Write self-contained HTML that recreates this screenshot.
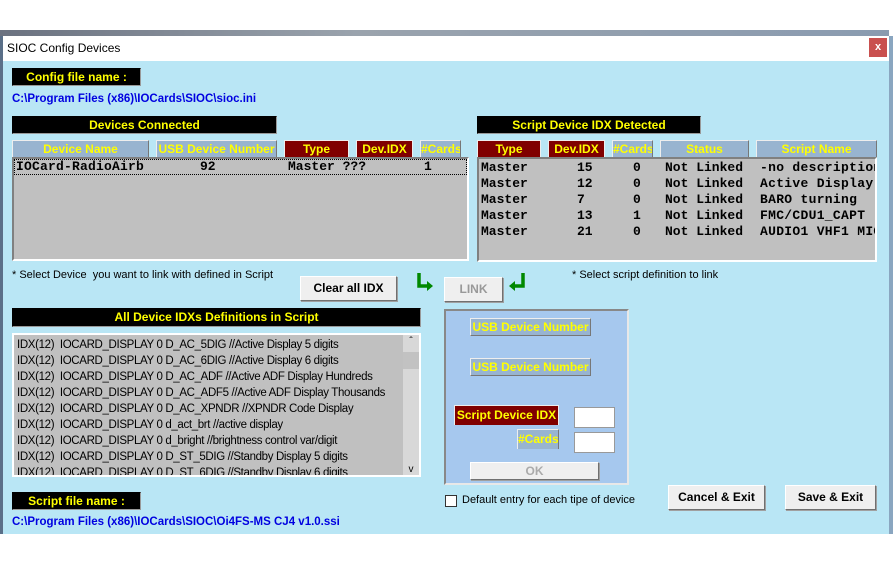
<!DOCTYPE html>
<html><head><meta charset="utf-8"><style>
*{margin:0;padding:0;box-sizing:border-box}
body{width:893px;height:564px;background:#fff;position:relative;overflow:hidden;font-family:"Liberation Sans",sans-serif}
.a{position:absolute}
.blk{background:#000;color:#ff0;font-weight:bold;font-size:12px;text-align:center;line-height:17px;border:1px solid #999;border-left-color:#000;border-top-color:#000}
.hb{background:#98b4d0;color:#ff0;font-weight:bold;font-size:12px;text-align:center;line-height:16px;border:1px solid #eee;border-right-color:#777;border-bottom:none;white-space:nowrap;overflow:hidden}
.hm{background:#800000;color:#ff0;font-weight:bold;font-size:12px;text-align:center;line-height:16px;border:1px solid #eee;border-bottom:none;white-space:nowrap;overflow:hidden}
.list{background:#c0c0c0;border:2px solid;border-color:#808080 #fff #fff #808080}
.mono{position:absolute;font-family:"Liberation Mono",monospace;font-weight:bold;font-size:13px;white-space:pre;line-height:16px;color:#000}
.btn{background:#efefef;border:1px solid;border-color:#fff #707070 #707070 #fff;box-shadow:1px 1px 0 #a0a0a0;font-weight:bold;font-size:12px;text-align:center;color:#000}
.sm{font-size:11px;color:#000;white-space:nowrap}
.path{color:#0000e0;font-weight:bold;font-size:11.5px;white-space:nowrap}
</style></head><body>
<div class="a" style="left:0;width:889px;height:6px;top:30px;background:linear-gradient(90deg,#6b7280,#9aa3ad 40%,#8a9bb0)"></div>
<div class="a" style="left:0;top:36px;width:3px;height:498px;background:#5a6f88"></div>
<div class="a" style="left:889px;top:36px;width:4px;height:498px;background:#8aa6c0"></div>
<div class="a" style="left:3px;top:36px;width:886px;height:25px;background:#fff"></div>
<div class="a sm" style="left:7px;top:41px;font-size:12px">SIOC Config Devices</div>
<div class="a" style="left:869px;top:38px;width:18px;height:19px;background:#c9504f;color:#fff;font-size:11px;font-weight:bold;text-align:center;line-height:18px">x</div>
<div class="a" style="left:3px;top:61px;width:886px;height:473px;background:#b9e6f5"></div>

<div class="a blk" style="left:12px;top:68px;width:129px;height:18px">Config file name :</div>
<div class="a path" style="left:12px;top:93px">C:\Program Files (x86)\IOCards\SIOC\sioc.ini</div>

<div class="a blk" style="left:12px;top:116px;width:265px;height:18px">Devices Connected</div>
<div class="a hb" style="left:12px;top:140px;width:137px;height:17px">Device Name</div>
<div class="a hb" style="left:156px;top:140px;width:121px;height:17px">USB Device Number</div>
<div class="a hm" style="left:284px;top:140px;width:65px;height:17px">Type</div>
<div class="a hm" style="left:356px;top:140px;width:57px;height:17px">Dev.IDX</div>
<div class="a hb" style="left:420px;top:140px;width:41px;height:17px">#Cards</div>
<div class="a list" style="left:12px;top:157px;width:457px;height:104px"></div>
<div class="a" style="left:14px;top:159px;width:453px;height:16px;border:1px dotted #000"></div>
<div class="mono" style="left:16px;top:159px;letter-spacing:0.2px">IOCard-RadioAirb</div>
<div class="mono" style="left:200px;top:159px">92</div>
<div class="mono" style="left:288px;top:159px">Master ???</div>
<div class="mono" style="left:424px;top:159px">1</div>

<div class="a blk" style="left:477px;top:116px;width:224px;height:18px">Script Device IDX Detected</div>
<div class="a hm" style="left:477px;top:140px;width:64px;height:17px">Type</div>
<div class="a hm" style="left:548px;top:140px;width:57px;height:17px">Dev.IDX</div>
<div class="a hb" style="left:612px;top:140px;width:41px;height:17px">#Cards</div>
<div class="a hb" style="left:660px;top:140px;width:89px;height:17px">Status</div>
<div class="a hb" style="left:756px;top:140px;width:121px;height:17px">Script Name</div>
<div class="a list" style="left:477px;top:157px;width:400px;height:105px;overflow:hidden">
<div class="mono" style="left:2px;top:1px">Master<br>Master<br>Master<br>Master<br>Master</div>
<div class="mono" style="left:98px;top:1px">15<br>12<br>7<br>13<br>21</div>
<div class="mono" style="left:154px;top:1px">0<br>0<br>0<br>1<br>0</div>
<div class="mono" style="left:186px;top:1px">Not Linked<br>Not Linked<br>Not Linked<br>Not Linked<br>Not Linked</div>
<div class="mono" style="left:281px;top:1px;letter-spacing:0.3px">-no description<br>Active Display<br>BARO turning<br>FMC/CDU1_CAPT<br>AUDIO1 VHF1 MIC</div>
</div>

<div class="a sm" style="left:12px;top:269px">* Select Device&nbsp; you want to link with defined in Script</div>
<div class="a btn" style="left:300px;top:276px;width:97px;height:25px;line-height:23px">Clear all IDX</div>
<svg class="a" style="left:416px;top:272px" width="18" height="20"><path d="M3 1V14H12" stroke="#080" stroke-width="3.5" fill="none"/><path d="M11 9L17 14L11 19Z" fill="#080"/></svg>
<div class="a btn" style="left:444px;top:277px;width:59px;height:25px;line-height:23px;color:#999">LINK</div>
<svg class="a" style="left:509px;top:272px" width="18" height="20"><path d="M14 1V14H5" stroke="#080" stroke-width="3.5" fill="none"/><path d="M6 9L0 14L6 19Z" fill="#080"/></svg>
<div class="a sm" style="left:572px;top:269px">* Select script definition to link</div>

<div class="a blk" style="left:12px;top:308px;width:409px;height:19px">All Device IDXs Definitions in Script</div>
<div class="a list" style="left:12px;top:333px;width:409px;height:144px;overflow:hidden;border-color:#fff"><div style="font-size:11.5px;line-height:16px;margin:2px 0 0 3px;white-space:nowrap;letter-spacing:-0.35px">IDX(12)&nbsp; IOCARD_DISPLAY 0 D_AC_5DIG //Active Display 5 digits<br>IDX(12)&nbsp; IOCARD_DISPLAY 0 D_AC_6DIG //Active Display 6 digits<br>IDX(12)&nbsp; IOCARD_DISPLAY 0 D_AC_ADF //Active ADF Display Hundreds<br>IDX(12)&nbsp; IOCARD_DISPLAY 0 D_AC_ADF5 //Active ADF Display Thousands<br>IDX(12)&nbsp; IOCARD_DISPLAY 0 D_AC_XPNDR //XPNDR Code Display<br>IDX(12)&nbsp; IOCARD_DISPLAY 0 d_act_brt //active display<br>IDX(12)&nbsp; IOCARD_DISPLAY 0 d_bright //brightness control var/digit<br>IDX(12)&nbsp; IOCARD_DISPLAY 0 D_ST_5DIG //Standby Display 5 digits<br>IDX(12)&nbsp; IOCARD_DISPLAY 0 D_ST_6DIG //Standby Display 6 digits</div>
<div class="a" style="left:389px;top:0;width:16px;height:140px;background:#d8d8d8"><div style="font-size:10px;text-align:center;line-height:14px">&#710;</div><div style="position:absolute;top:17px;left:0;width:16px;height:17px;background:#c2c2c2"></div><div style="position:absolute;bottom:0;width:16px;font-size:10px;text-align:center">v</div></div></div>

<div class="a" style="left:444px;top:309px;width:185px;height:176px;background:#a6c8ee;border:2px solid #e8e8e8;border-color:#888 #e8e8e8 #e8e8e8 #888"></div>
<div class="a hb" style="left:470px;top:318px;width:121px;height:18px;border-bottom:1px solid #777">USB Device Number</div>
<div class="a hb" style="left:470px;top:358px;width:121px;height:18px;border-bottom:1px solid #777">USB Device Number</div>
<div class="a hm" style="left:454px;top:405px;width:105px;height:20px;line-height:18px">Script Device IDX</div>
<div class="a" style="left:574px;top:407px;width:41px;height:21px;background:#fff;border:1px solid #999"></div>
<div class="a hb" style="left:517px;top:429px;width:42px;height:20px;line-height:18px">#Cards</div>
<div class="a" style="left:574px;top:432px;width:41px;height:21px;background:#fff;border:1px solid #999"></div>
<div class="a btn" style="left:470px;top:462px;width:129px;height:18px;line-height:16px;color:#aaa">OK</div>

<div class="a" style="left:445px;top:495px;width:12px;height:12px;background:#fff;border:1px solid #333"></div>
<div class="a sm" style="left:462px;top:494px">Default entry for each tipe of device</div>
<div class="a btn" style="left:668px;top:485px;width:97px;height:25px;line-height:23px">Cancel &amp; Exit</div>
<div class="a btn" style="left:785px;top:485px;width:91px;height:25px;line-height:23px">Save &amp; Exit</div>

<div class="a blk" style="left:12px;top:492px;width:129px;height:18px">Script file name :</div>
<div class="a path" style="left:12px;top:516px">C:\Program Files (x86)\IOCards\SIOC\Oi4FS-MS CJ4 v1.0.ssi</div>
</body></html>
